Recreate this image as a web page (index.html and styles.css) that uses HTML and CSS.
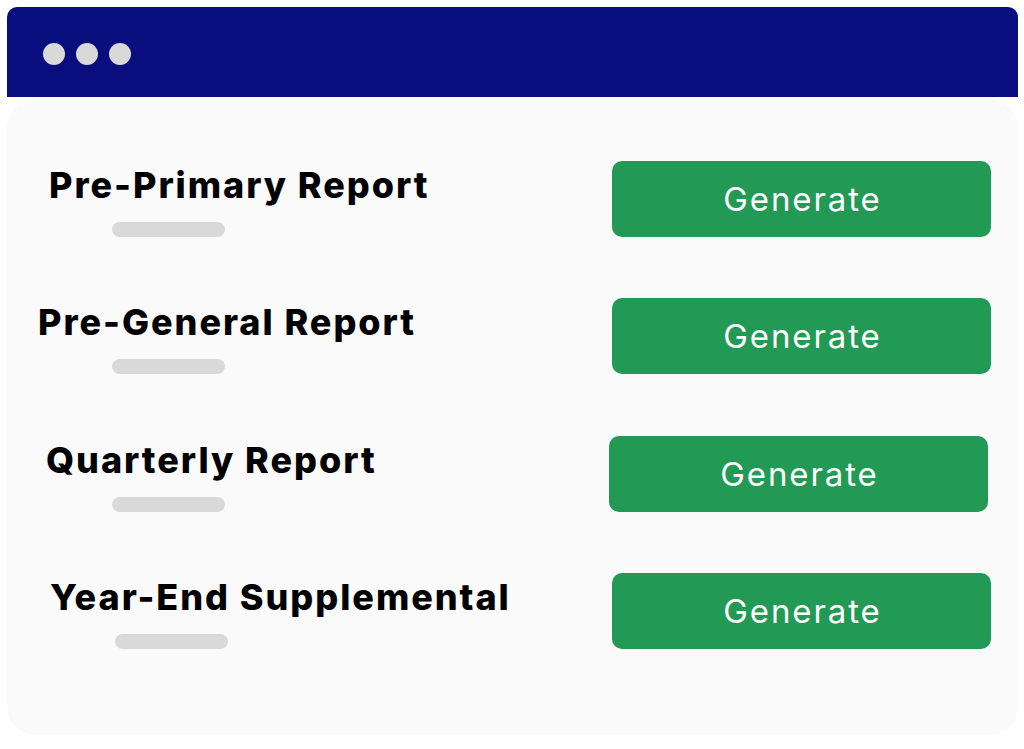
FILE: index.html
```html
<!DOCTYPE html>
<html>
<head>
<meta charset="utf-8">
<link rel="stylesheet" href="styles.css">
</head>
<body>
<div class="window">
  <div class="titlebar">
    <span class="dot"></span><span class="dot"></span><span class="dot"></span>
  </div>
  <div class="card">
    <div class="row row-1">
      <div class="info">
        <h2 class="title">Pre-Primary Report</h2>
        <div class="bar"></div>
      </div>
      <button class="btn">Generate</button>
    </div>
    <div class="row row-2">
      <div class="info">
        <h2 class="title">Pre-General Report</h2>
        <div class="bar"></div>
      </div>
      <button class="btn">Generate</button>
    </div>
    <div class="row row-3">
      <div class="info">
        <h2 class="title">Quarterly Report</h2>
        <div class="bar"></div>
      </div>
      <button class="btn">Generate</button>
    </div>
    <div class="row row-4">
      <div class="info">
        <h2 class="title">Year-End Supplemental</h2>
        <div class="bar"></div>
      </div>
      <button class="btn">Generate</button>
    </div>
  </div>
</div>
</body>
</html>
```

FILE: styles.css
```css
* { box-sizing: border-box; }
html, body { margin: 0; padding: 0; background: #ffffff; }
body { font-family: Inter, "Noto Sans", sans-serif; }

.window {
  margin: 7px 6px 0 7px;
  width: 1011px;
}

.titlebar {
  height: 90px;
  background: #080e7e;
  border-radius: 10px 10px 0 0;
  display: flex;
  align-items: center;
  gap: 11px;
  padding: 4px 0 0 36px;
}

.dot {
  width: 22px;
  height: 22px;
  border-radius: 50%;
  background: #d9d9d9;
}

.card {
  margin-top: 3px;
  height: 635px;
  background: #fafafa;
  border-radius: 28px;
  padding-top: 61px;
  display: flex;
  flex-direction: column;
  gap: 61px;
}

.row {
  height: 76px;
  display: flex;
  justify-content: space-between;
  align-items: flex-start;
  padding-right: 27px;
}

.info {
  display: flex;
  flex-direction: column;
  padding-top: 2px;
}

.title {
  margin: 0;
  font-size: 36px;
  line-height: 44px;
  font-weight: 800;
  letter-spacing: 1.95px;
  color: #000;
  white-space: nowrap;
}

.bar {
  margin-top: 15px;
  width: 113px;
  height: 15px;
  border-radius: 8px;
  background: #d9d9d9;
}

.btn {
  width: 379px;
  height: 76px;
  border: none;
  border-radius: 10px;
  background: #229954;
  color: #ffffff;
  font-family: Inter, "Noto Sans", sans-serif;
  font-size: 33px;
  font-weight: 400;
  letter-spacing: 1.9px;
  padding: 0 0 0 2px;
  margin-top: 0;
}

.row-1 .title { margin-left: 42px; }
.row-1 .bar { margin-left: 105px; }

.row-2 .title { margin-left: 31px; }
.row-2 .bar { margin-left: 105px; }

.row-3 { padding-right: 30px; margin-top: 1px; }
.row-3 .title { margin-left: 39px; }
.row-3 .bar { margin-left: 105px; }

.row-4 .title { margin-left: 43px; }
.row-4 .bar { margin-left: 108px; }
```
